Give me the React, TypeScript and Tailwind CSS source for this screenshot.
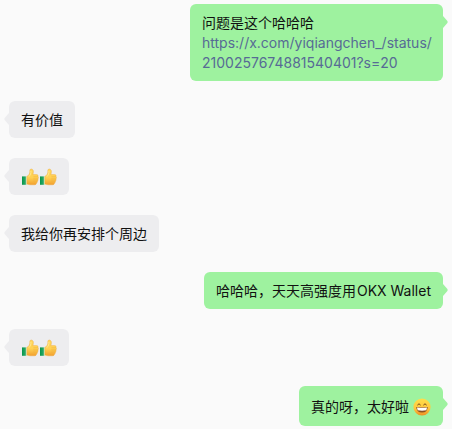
import { useId, type ReactNode } from 'react';

type Side = 'in' | 'out';

function Bubble({ side, children }: { side: Side; children: ReactNode }) {
  const out = side === 'out';
  return (
    <li className={out ? 'flex justify-end' : 'flex justify-start'}>
      <div
        className={
          out
            ? 'relative max-w-[253px] rounded-md bg-[#9ef29f] px-3 pt-[9px] pb-2'
            : 'relative max-w-[253px] rounded-md bg-[#ededef] px-3 pt-[9px] pb-2'
        }
      >
        <svg
          aria-hidden="true"
          viewBox="0 0 6 12"
          className={
            out
              ? 'absolute top-3 -right-[5px] h-3 w-[6px] text-[#9ef29f]'
              : 'absolute top-3 -left-[5px] h-3 w-[6px] -scale-x-100 text-[#ededef]'
          }
        >
          <path d="M0 0H1L5.4 5Q6 6 5.4 7L1 12H0Z" fill="currentColor" />
        </svg>
        {children}
      </div>
    </li>
  );
}

function ThumbsUp() {
  const id = useId();
  const skin = `${id}-skin`;
  const cuff = `${id}-cuff`;
  return (
    <svg role="img" aria-label="👍" viewBox="0 0 18 18" className="size-[18px]">
      <defs>
        <linearGradient id={skin} x1="0" y1="0" x2="0" y2="1">
          <stop offset="0" stopColor="#ffd75e" />
          <stop offset="0.55" stopColor="#ffd153" />
          <stop offset="1" stopColor="#f2a02e" />
        </linearGradient>
        <linearGradient id={cuff} x1="0" y1="0" x2="1" y2="0">
          <stop offset="0" stopColor="#07964a" />
          <stop offset="0.6" stopColor="#25a663" />
          <stop offset="1" stopColor="#8fd0a2" />
        </linearGradient>
      </defs>
      <path d="M1 8.4H5.8V16.8H1Z" fill={`url(#${cuff})`} />
      <path d="M5.2 8.3H6.4V16.7H5.2Z" fill="#e6efcd" />
      <path
        d="M5.9 8.4C7.4 7.6 8.5 6.2 8.8 4.3C8.9 3 8.5 1.9 9.5 1.2C10.8.6 12.3 1.6 12.4 3.3C12.5 4.5 12.1 5.6 11.9 6.6H15.5C17 6.6 17.5 7.8 17 8.7C17.6 9.4 17.5 10.4 16.9 10.9C17.3 11.7 17 12.6 16.4 13C16.6 13.9 16.2 14.6 15.6 14.9C15.5 16.2 14.6 16.8 13.2 16.8H9.4C8 16.8 7 16.4 5.9 16Z"
        fill={`url(#${skin})`}
        stroke="#eda337"
        strokeWidth="0.4"
      />
      <path d="M12.4 8.8H16.8M12.2 10.9H16.6M12.2 13H16.1" stroke="#efac3d" strokeWidth="0.5" fill="none" />
      <path d="M9.9 2.8C10.1 5 9.4 7 8 8.6" stroke="#ffeb96" strokeWidth="0.9" fill="none" />
    </svg>
  );
}

function Grin() {
  const id = useId();
  const face = `${id}-face`;
  return (
    <svg role="img" aria-label="😄" viewBox="0 0 18 18" className="size-[18px]">
      <defs>
        <linearGradient id={face} x1="0" y1="0" x2="0" y2="1">
          <stop offset="0" stopColor="#ffdf4a" />
          <stop offset="0.6" stopColor="#ffc63c" />
          <stop offset="1" stopColor="#ee8d22" />
        </linearGradient>
      </defs>
      <circle cx="9" cy="9" r="8.6" fill={`url(#${face})`} />
      <path
        d="M4.6 6.8Q6 4.4 7.4 6.8M10.6 6.8Q12 4.4 13.4 6.8"
        fill="none"
        stroke="#70431b"
        strokeWidth="1"
        strokeLinecap="round"
      />
      <path d="M3.2 9Q9 9.5 14.8 9Q14.4 14.6 9 14.6Q3.6 14.6 3.2 9Z" fill="#8a4f20" />
      <path d="M3.9 9.6Q9 10.1 14.1 9.6L13.3 12.3Q9 13.2 4.7 12.3Z" fill="#fff" />
    </svg>
  );
}

function Thumbs() {
  return (
    <p className="flex h-5 items-center">
      <ThumbsUp />
      <ThumbsUp />
    </p>
  );
}

export default function App() {
  return (
    <main className="min-h-screen bg-[#fafafa] pt-1 pr-[9px] pb-[3px] pl-[9px] font-['Inter','Noto_Sans_CJK_SC',sans-serif] text-sm leading-5 text-[#111]">
      <ol className="flex flex-col gap-5" lang="zh-CN">
        <Bubble side="out">
          <p>问题是这个哈哈哈</p>
          <a href="https://x.com/yiqiangchen_/status/2100257674881540401?s=20" className="block text-[#576b95]">
            https://x.com/yiqiangchen_/status/
            <wbr />
            2100257674881540401?s=20
          </a>
        </Bubble>
        <Bubble side="in">
          <p>有价值</p>
        </Bubble>
        <Bubble side="in">
          <Thumbs />
        </Bubble>
        <Bubble side="in">
          <p>我给你再安排个周边</p>
        </Bubble>
        <Bubble side="out">
          <p className="flex gap-px">
            <span>哈哈哈，天天高强度用</span>
            <span>OKX Wallet</span>
          </p>
        </Bubble>
        <Bubble side="in">
          <Thumbs />
        </Bubble>
        <Bubble side="out">
          <p className="flex items-center gap-1 leading-[23px]">
            真的呀，太好啦
            <Grin />
          </p>
        </Bubble>
      </ol>
    </main>
  );
}
